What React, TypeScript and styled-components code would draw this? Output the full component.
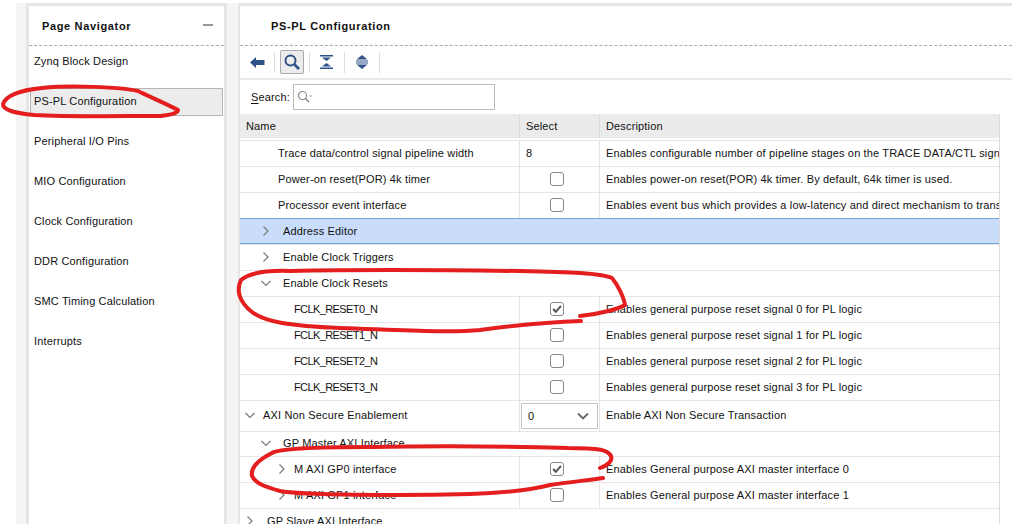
import styled, { createGlobalStyle } from "styled-components";

const GlobalStyle = createGlobalStyle`
    html, body {
        margin: 0;
        padding: 0;
        background: #fff;
    }
    body {
        font-family: "Liberation Sans", Arial, sans-serif;
        font-size: 11px;
        letter-spacing: 0.15px;
        color: #111;
    }
`;

const Page = styled.div`
    position: relative;
    width: 1012px;
    height: 524px;
    overflow: hidden;
    padding: 3px 0 0 16px;
    box-sizing: border-box;
    display: flex;
    background: #fff;
`;

const Shell = styled.div`
    flex: 1;
    display: flex;
    gap: 11px;
    background: #f5f5f5;
    padding: 0 0 0 10px;
    min-width: 0;
`;

const Panel = styled.div<{ $width?: string }>`
    background: #fff;
    border: solid #e6e6e6;
    border-width: 3px 3px 0 3px;
    box-sizing: border-box;
    width: ${p => p.$width ?? "auto"};
    flex: ${p => (p.$width ? "none" : "1")};
    min-width: 0;
    display: flex;
    flex-direction: column;
`;

const MainPanel = styled(Panel)`
    border-right: 0;
    border-left-width: 2px;
`;

const PanelHeader = styled.div`
    height: 39px;
    flex: none;
    display: flex;
    align-items: center;
    justify-content: space-between;
    padding: 0 6px 0 13px;
    border-bottom: 1px dashed #aaa;
    font-weight: bold;
    font-size: 11px;
    letter-spacing: 0.65px;
`;

const MainHeader = styled(PanelHeader)`
    padding-left: 31px;
`;

const Dash = styled.span`
    width: 10px;
    height: 2px;
    margin-right: 5px;
    margin-bottom: 2px;
    background: #999;
`;

const NavList = styled.div`
    display: flex;
    flex-direction: column;
    gap: 10px;
`;

const NavItem = styled.div<{ $selected?: boolean }>`
    height: 30px;
    display: flex;
    align-items: center;
    box-sizing: border-box;
    padding-left: 5px;
    position: relative;

    ${p => p.$selected && `
        &::before {
            content: "";
            position: absolute;
            left: 1px;
            right: 1px;
            top: 2px;
            height: 28px;
            box-sizing: border-box;
            background: #ececec;
            border: 1px solid #b5b5b5;
        }
    `}
`;

const NavLabel = styled.span`
    position: relative;
`;

const Toolbar = styled.div`
    height: 32px;
    flex: none;
    display: flex;
    align-items: center;
    padding-left: 8px;
    border-bottom: 2px solid #e9e9e9;
`;

const ToolButton = styled.button<{ $active?: boolean; $width?: number }>`
    width: ${p => p.$width ?? 24}px;
    height: 24px;
    padding: 0;
    display: flex;
    align-items: center;
    justify-content: center;
    box-sizing: border-box;
    background: ${p => (p.$active ? "#ececec" : "transparent")};
    border: 1px solid ${p => (p.$active ? "#aaa" : "transparent")};
    border-radius: 2px;
`;

const ToolSep = styled.span<{ $left?: number }>`
    width: 1px;
    height: 21px;
    background: #dcdcdc;
    margin: 0 5px 0 ${p => p.$left ?? 5}px;
`;

const SearchBar = styled.div`
    height: 34px;
    flex: none;
    display: flex;
    align-items: center;
    padding-left: 11px;
`;

const SearchLabel = styled.label`
    width: 42px;
    & > u {
        text-underline-offset: 2px;
    }
`;

const SearchBox = styled.div`
    width: 202px;
    height: 26px;
    box-sizing: border-box;
    border: 1px solid #bbb;
    display: flex;
    align-items: center;
    padding-left: 3px;
`;

const Table = styled.div`
    width: 760px;
    flex: none;
    border-right: 1px solid #dcdcdc;
    height: 100%;
    box-sizing: border-box;
`;

const Columns = styled.div`
    display: grid;
    grid-template-columns: 280px 80px 1fr;
`;

const HeaderRow = styled(Columns)`
    height: 24px;
    margin-bottom: 2px;
    background: #ebebeb;
`;

const HeaderCell = styled.div`
    display: flex;
    align-items: center;
    padding-left: 6px;
    border-right: 1px solid #dcdcdc;
    &:last-child {
        border-right: 0;
    }
`;

const Row = styled(Columns)<{ $height: number; $pad: number }>`
    height: ${p => p.$height}px;
    box-sizing: border-box;
    border-top: 1px solid #e6e6e6;
    & > * {
        padding-bottom: ${p => p.$pad}px;
    }
`;

const SectionRow = styled.div<{ $highlight?: boolean; $height: number; $pad: number }>`
    height: ${p => p.$height}px;
    padding-bottom: ${p => p.$pad}px;
    box-sizing: border-box;
    display: flex;
    align-items: center;
    border-top: 1px solid ${p => (p.$highlight ? "#6ea6d8" : "#e6e6e6")};
    ${p => p.$highlight && `
        background: #c9dcfb;
        box-shadow: inset 0 -1px 0 #6ea6d8;
    `}
`;

const NameCell = styled.div<{ $indent: number }>`
    display: flex;
    align-items: center;
    padding-left: ${p => p.$indent}px;
    border-right: 1px solid #e6e6e6;
    white-space: nowrap;
    overflow: hidden;
`;

const Indent = styled.div<{ $indent: number }>`
    padding-left: ${p => p.$indent}px;
    display: flex;
    align-items: center;
    white-space: nowrap;
`;

const Arrow = styled.span<{ $gap: number }>`
    display: flex;
    margin-right: ${p => p.$gap}px;
`;

const SignalName = styled.span<{ $caps?: boolean }>`
    letter-spacing: ${p => (p.$caps ? "-0.6px" : "inherit")};
`;

const SelectCell = styled.div<{ $check?: boolean }>`
    display: flex;
    align-items: center;
    padding-left: ${p => (p.$check ? 30 : 6)}px;
    border-right: 1px solid #e6e6e6;
`;

const DescCell = styled.div`
    display: flex;
    align-items: center;
    padding-left: 6px;
    white-space: nowrap;
    overflow: hidden;
`;

const Check = styled.span`
    width: 14px;
    height: 14px;
    box-sizing: border-box;
    border: 1px solid #888;
    border-radius: 3px;
    background: #fff;
    display: flex;
    align-items: center;
    justify-content: center;
`;

const Dropdown = styled.div`
    width: 77px;
    height: 26px;
    margin-top: 2px;
    box-sizing: border-box;
    border: 1px solid #c4c4c4;
    display: flex;
    align-items: center;
    justify-content: space-between;
    padding: 0 8px 0 6px;
`;

const DropdownCell = styled(SelectCell)`
    padding-left: 1px;
`;

const Overlay = styled.svg`
    position: absolute;
    left: 0;
    top: 0;
    pointer-events: none;
`;

const Chevron = ({ open }: { open?: boolean }) => (
    <svg width="10" height="10" viewBox="0 0 10 10" fill="none" stroke="#7a7a7a" strokeWidth="1.2">
        <path d={open ? "M.5 3L5 7.5 9.5 3" : "M2.5.5L7 5 2.5 9.5"} />
    </svg>
);

const CheckBox = ({ checked }: { checked?: boolean }) => (
    <Check>
        {checked && (
            <svg width="10" height="10" viewBox="0 0 10 10" fill="none" stroke="#555" strokeWidth="2">
                <path d="M1.2 5l2.6 2.8L9 1.8" />
            </svg>
        )}
    </Check>
);

const navItems = [
    "Zynq Block Design",
    "PS-PL Configuration",
    "Peripheral I/O Pins",
    "MIO Configuration",
    "Clock Configuration",
    "DDR Configuration",
    "SMC Timing Calculation",
    "Interrupts",
];

type Item = {
    name: string;
    indent: number;
    arrow?: "open" | "closed";
    gap?: number;
    section?: boolean;
    highlight?: boolean;
    height?: number;
    pad?: number;
    caps?: boolean;
    value?: string;
    dropdown?: string;
    checked?: boolean;
    checkbox?: boolean;
    desc?: string;
};

const rows: Item[] = [
    { name: "Trace data/control signal pipeline width", indent: 38, value: "8", desc: "Enables configurable number of pipeline stages on the TRACE DATA/CTL signals" },
    { name: "Power-on reset(POR) 4k timer", indent: 38, checkbox: true, desc: "Enables power-on reset(POR) 4k timer. By default, 64k timer is used." },
    { name: "Processor event interface", indent: 38, checkbox: true, desc: "Enables event bus which provides a low-latency and direct mechanism to transfer" },
    { name: "Address Editor", indent: 21, arrow: "closed", gap: 12, section: true, highlight: true },
    { name: "Enable Clock Triggers", indent: 21, arrow: "closed", gap: 12, section: true },
    { name: "Enable Clock Resets", indent: 21, arrow: "open", gap: 12, section: true },
    { name: "FCLK_RESET0_N", indent: 54, caps: true, checkbox: true, checked: true, desc: "Enables general purpose reset signal 0 for PL logic" },
    { name: "FCLK_RESET1_N", indent: 54, caps: true, checkbox: true, desc: "Enables general purpose reset signal 1 for PL logic" },
    { name: "FCLK_RESET2_N", indent: 54, caps: true, checkbox: true, desc: "Enables general purpose reset signal 2 for PL logic" },
    { name: "FCLK_RESET3_N", indent: 54, caps: true, checkbox: true, desc: "Enables general purpose reset signal 3 for PL logic" },
    { name: "AXI Non Secure Enablement", indent: 5, arrow: "open", gap: 8, height: 31, pad: 3, dropdown: "0", desc: "Enable AXI Non Secure Transaction" },
    { name: "GP Master AXI Interface", indent: 21, arrow: "open", gap: 12, section: true, height: 25, pad: 3 },
    { name: "M AXI GP0 interface", indent: 37, arrow: "closed", gap: 7, checkbox: true, checked: true, desc: "Enables General purpose AXI master interface 0" },
    { name: "M AXI GP1 interface", indent: 37, arrow: "closed", gap: 7, checkbox: true, desc: "Enables General purpose AXI master interface 1" },
    { name: "GP Slave AXI Interface", indent: 5, arrow: "closed", gap: 12, section: true },
];

const RowName = ({ item }: { item: Item }) => (
    <>
        {item.arrow && (
            <Arrow $gap={item.gap ?? 8}>
                <Chevron open={item.arrow === "open"} />
            </Arrow>
        )}
        <SignalName $caps={item.caps}>{item.name}</SignalName>
    </>
);

export default function App() {
    return (
        <Page>
            <GlobalStyle />
            <Shell>
                <Panel $width="201px">
                    <PanelHeader>
                        Page Navigator
                        <Dash />
                    </PanelHeader>
                    <NavList>
                        {navItems.map((n, i) => (
                            <NavItem key={n} $selected={i === 1}>
                                <NavLabel>{n}</NavLabel>
                            </NavItem>
                        ))}
                    </NavList>
                </Panel>
                <MainPanel>
                    <MainHeader>PS-PL Configuration</MainHeader>
                    <Toolbar>
                        <ToolButton $width={18}>
                            <svg width="15" height="11" viewBox="0 0 15 11">
                                <path d="M0 5.5L6 0v3h8.5v5H6v3z" fill="#2f5288" />
                            </svg>
                        </ToolButton>
                        <ToolSep $left={8} />
                        <ToolButton $active>
                            <svg width="16" height="16" viewBox="0 0 16 16" fill="none" stroke="#2f5288">
                                <circle cx="6.5" cy="6.5" r="5" strokeWidth="2" />
                                <path d="M10.5 10.5l4.5 4.5" strokeWidth="2.6" />
                            </svg>
                        </ToolButton>
                        <ToolSep />
                        <ToolButton>
                            <svg width="14" height="14" viewBox="0 0 14 14" fill="#2f5288">
                                <path d="M0 0h13v1.4H0zM2 2.5h9L6.5 6zM6.5 8L11 11.5H2zM0 12.6h13V14H0z" />
                            </svg>
                        </ToolButton>
                        <ToolSep />
                        <ToolButton>
                            <svg width="14" height="14" viewBox="0 0 14 14" fill="#2f5288">
                                <path d="M7 0l5.5 4.4h-11zM1 5.4h12v1.1H1zM1 7.5h12v1.1H1zM1.5 9.6h11L7 14z" />
                            </svg>
                        </ToolButton>
                        <ToolSep />
                    </Toolbar>
                    <SearchBar>
                        <SearchLabel>
                            <u>S</u>earch:
                        </SearchLabel>
                        <SearchBox>
                            <svg width="15" height="14" viewBox="0 0 15 14" fill="none" stroke="#8d8d8d">
                                <circle cx="5.5" cy="5.5" r="4" strokeWidth="1.2" />
                                <path d="M8.5 8.5l3.5 3.5" strokeWidth="1.6" />
                                <path d="M12 5.5h3l-1.5 1.5z" fill="#8d8d8d" stroke="none" />
                            </svg>
                        </SearchBox>
                    </SearchBar>
                    <Table>
                        <HeaderRow>
                            <HeaderCell>Name</HeaderCell>
                            <HeaderCell>Select</HeaderCell>
                            <HeaderCell>Description</HeaderCell>
                        </HeaderRow>
                        {rows.map(item =>
                            item.section ? (
                                <SectionRow key={item.name} $highlight={item.highlight} $height={item.height ?? 26} $pad={item.pad ?? 2}>
                                    <Indent $indent={item.indent}>
                                        <RowName item={item} />
                                    </Indent>
                                </SectionRow>
                            ) : (
                                <Row key={item.name} $height={item.height ?? 26} $pad={item.pad ?? 2}>
                                    <NameCell $indent={item.indent}>
                                        <RowName item={item} />
                                    </NameCell>
                                    {item.dropdown ? (
                                        <DropdownCell>
                                            <Dropdown>
                                                {item.dropdown}
                                                <svg width="12" height="8" viewBox="0 0 12 8" fill="none" stroke="#666" strokeWidth="1.8">
                                                    <path d="M1 1.5l5 5 5-5" />
                                                </svg>
                                            </Dropdown>
                                        </DropdownCell>
                                    ) : (
                                        <SelectCell $check={item.checkbox}>
                                            {item.checkbox ? <CheckBox checked={item.checked} /> : item.value}
                                        </SelectCell>
                                    )}
                                    <DescCell>{item.desc}</DescCell>
                                </Row>
                            ),
                        )}
                    </Table>
                </MainPanel>
            </Shell>
            <Overlay width="1012" height="524" viewBox="0 0 1012 524" fill="none" stroke="#e41e1e" strokeWidth="4" strokeLinecap="round" strokeLinejoin="round">
                <path d="M178 110C165 103 150 97 138 91C120 87 70 85 42 88C20 90 6 96 3 104C3 110 14 113 34 115C70 117 120 116 160 116C172 115 178 113 178 110Z" />
                <path d="M580 316C600 314 618 309 625 305C624 298 618 285 612 278C600 273 570 272 520 271C440 270 340 270 290 271C265 270 248 274 241 280C236 290 239 302 252 312C265 322 290 326 340 328C400 330 450 333 480 330C510 326 550 322 581 321" />
                <path d="M600 468C608 465 613 461 611 456C608 450 600 448 568 448C500 446 420 446 370 447C320 447 280 448 272 453C262 458 250 466 252 476C256 484 266 487 280 491C300 495 400 496 470 494C510 493 530 490 550 485C570 482 590 480 603 478" />
            </Overlay>
        </Page>
    );
}
